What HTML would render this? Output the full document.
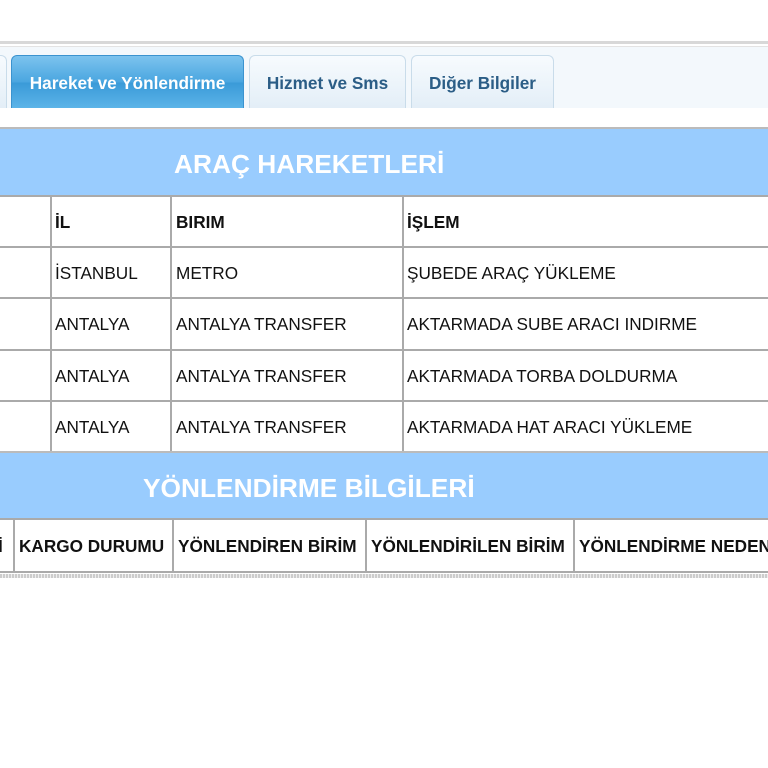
<!DOCTYPE html>
<html><head><meta charset="utf-8"><style>
body{margin:0;width:768px;height:768px;background:#fff;font-family:"Liberation Sans",sans-serif;position:relative;overflow:hidden}
.a{position:absolute}
.tab{position:absolute;top:55px;height:53px;border:1px solid #c9dcea;border-bottom:none;border-radius:6px 6px 0 0;background:linear-gradient(#f7fbfe,#e3eef7);color:#2b5d86;font-weight:bold;font-size:17.2px;line-height:54px;text-align:center;box-sizing:border-box}
.act{background:linear-gradient(#7cc3ee,#4aa6e0 50%,#3a9ad8 52%,#5cb4e8);color:#fff;border-color:#3b93cf}
.bar{position:absolute;left:0;width:768px;background:#99ccfe;color:#fff;font-weight:bold;font-size:26.3px;border-top:2px solid #bbb}
.h{position:absolute;left:0;width:768px;background:#aaa}
.v{position:absolute;width:2px;background:#aaa}
.t{position:absolute;font-size:17.2px;color:#111;line-height:20px;white-space:nowrap}
.b{font-weight:bold}
</style></head><body>
<div class="a" style="top:41px;left:0;width:768px;height:3px;background:#d8d8d8"></div>
<div class="a" style="top:46px;left:0;width:768px;height:62px;background:#f3f8fc;border-top:1px solid #e3e3e3"></div>
<div class="tab" style="left:-10px;width:17px"></div>
<div class="tab act" style="left:11px;width:233px">Hareket ve Yönlendirme</div>
<div class="tab" style="left:249px;width:157px">Hizmet ve Sms</div>
<div class="tab" style="left:411px;width:143px">Diğer Bilgiler</div>
<div class="a" style="top:108px;left:0;width:768px;height:20px;background:#fff"></div>

<div class="bar" style="top:127px;height:67px"><span class="a" style="left:174px;top:20px">ARAÇ HAREKETLERİ</span></div>
<div class="h" style="top:195px;height:2px"></div>
<div class="h" style="top:246px;height:2px"></div>
<div class="h" style="top:297px;height:2px"></div>
<div class="h" style="top:349px;height:2px"></div>
<div class="h" style="top:400px;height:2px"></div>
<div class="v" style="left:50px;top:195px;height:257px"></div>
<div class="v" style="left:170px;top:195px;height:257px"></div>
<div class="v" style="left:402px;top:195px;height:257px"></div>
<div class="t b" style="left:55px;top:212px">İL</div>
<div class="t b" style="left:176px;top:212px">BIRIM</div>
<div class="t b" style="left:407px;top:212px">İŞLEM</div>
<div class="t" style="left:55px;top:263px">İSTANBUL</div>
<div class="t" style="left:176px;top:263px">METRO</div>
<div class="t" style="left:407px;top:263px">ŞUBEDE ARAÇ YÜKLEME</div>
<div class="t" style="left:55px;top:314px">ANTALYA</div>
<div class="t" style="left:176px;top:314px">ANTALYA TRANSFER</div>
<div class="t" style="left:407px;top:314px">AKTARMADA SUBE ARACI INDIRME</div>
<div class="t" style="left:55px;top:366px">ANTALYA</div>
<div class="t" style="left:176px;top:366px">ANTALYA TRANSFER</div>
<div class="t" style="left:407px;top:366px">AKTARMADA TORBA DOLDURMA</div>
<div class="t" style="left:55px;top:417px">ANTALYA</div>
<div class="t" style="left:176px;top:417px">ANTALYA TRANSFER</div>
<div class="t" style="left:407px;top:417px">AKTARMADA HAT ARACI YÜKLEME</div>

<div class="bar" style="top:451px;height:67px"><span class="a" style="left:143px;top:20px">YÖNLENDİRME BİLGİLERİ</span></div>
<div class="h" style="top:518px;height:2px"></div>
<div class="v" style="left:13px;top:518px;height:54px"></div>
<div class="v" style="left:172px;top:518px;height:54px"></div>
<div class="v" style="left:365px;top:518px;height:54px"></div>
<div class="v" style="left:573px;top:518px;height:54px"></div>
<div class="t b" style="left:-2px;top:536px">İ</div>
<div class="t b" style="left:19px;top:536px">KARGO DURUMU</div>
<div class="t b" style="left:178px;top:536px">YÖNLENDİREN BİRİM</div>
<div class="t b" style="left:371px;top:536px">YÖNLENDİRİLEN BİRİM</div>
<div class="t b" style="left:579px;top:536px">YÖNLENDİRME NEDENİ</div>
<div class="h" style="top:571px;height:2px"></div>
<div class="a" style="top:574px;left:0;width:768px;height:4px;background:repeating-linear-gradient(90deg,#ccc 0 2px,#eee 2px 3px)"></div>
</body></html>
